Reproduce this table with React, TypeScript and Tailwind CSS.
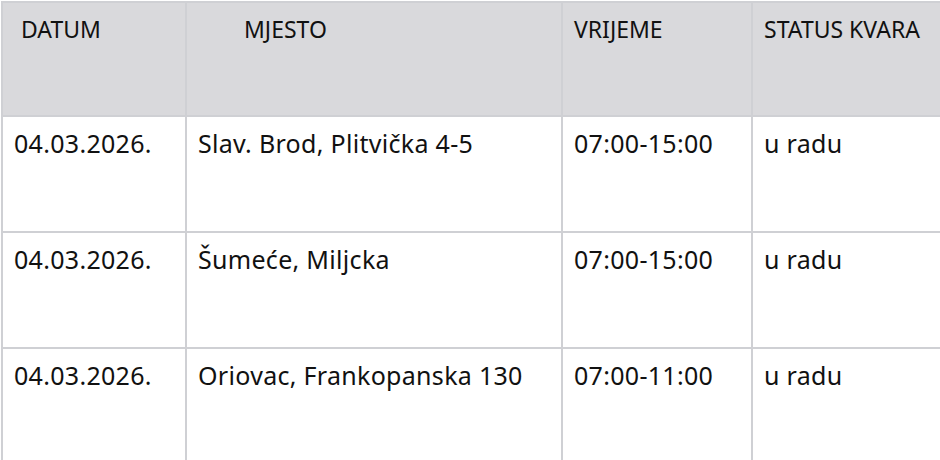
import React from 'react';

interface Outage {
  date: string;
  place: string;
  time: string;
  status: string;
}

const ROWS: Outage[] = [
  { date: '04.03.2026.', place: 'Slav. Brod, Plitvička 4-5', time: '07:00-15:00', status: 'u radu' },
  { date: '04.03.2026.', place: 'Šumeće, Miljcka', time: '07:00-15:00', status: 'u radu' },
  { date: '04.03.2026.', place: 'Oriovac, Frankopanska 130', time: '07:00-11:00', status: 'u radu' }
];

const cell = 'border-2 border-[#cfd0d4] align-top text-left';

export default function App() {
  return (
    <div className="w-[940px] h-[460px] overflow-hidden bg-white pl-[1px] pt-[1px] font-['Noto_Sans',sans-serif] text-[#111111]">
      <table className="table-fixed border-collapse w-[980px]">
        <colgroup>
          <col className="w-[184px]" />
          <col className="w-[376px]" />
          <col className="w-[190px]" />
          <col className="w-[230px]" />
        </colgroup>
        <thead>
          <tr className="h-[114px] bg-[#d9d9dc] text-[23px] leading-[28px] uppercase">
            <th className={`${cell} font-normal pt-[12px] pl-[18px]`}>Datum</th>
            <th className={`${cell} font-normal pt-[12px] pl-[57px]`}>Mjesto</th>
            <th className={`${cell} font-normal pt-[12px] pl-[11px]`}>Vrijeme</th>
            <th className={`${cell} font-normal pt-[12px] pl-[11px]`}>Status kvara</th>
          </tr>
        </thead>
        <tbody className="text-[25px] leading-[34px] tracking-[0.3px]">
          {ROWS.map((row, i) => (
            <tr key={i} className="h-[116px]">
              <td className={`${cell} pt-[9px] pl-[11px]`}>{row.date}</td>
              <td className={`${cell} pt-[9px] pl-[11px]`}>{row.place}</td>
              <td className={`${cell} pt-[9px] pl-[11px]`}>{row.time}</td>
              <td className={`${cell} pt-[9px] pl-[11px]`}>{row.status}</td>
            </tr>
          ))}
        </tbody>
      </table>
    </div>
  );
}
